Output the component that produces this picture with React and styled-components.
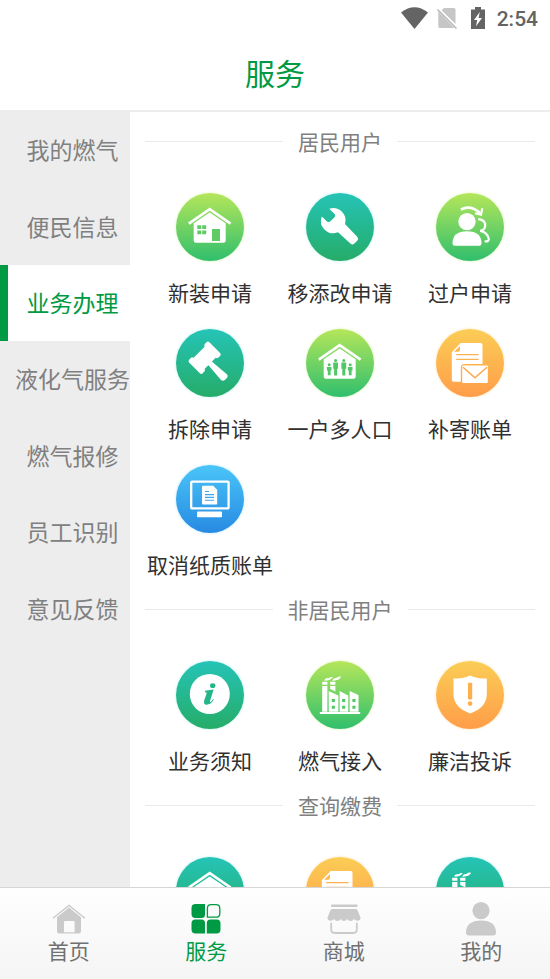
import React, { useState } from "react";
import styled, { createGlobalStyle } from "styled-components";

const GlobalStyle = createGlobalStyle`
  * { box-sizing: border-box; }
  body {
    margin: 0;
    background: #fff;
    font-family: "Noto Sans CJK SC", sans-serif;
  }
  button { border: 0; padding: 0; background: none; font: inherit; cursor: pointer; }
`;

const GREEN = "#009a44";

const Page = styled.div`
  height: 100vh;
  display: flex;
  flex-direction: column;
  overflow: hidden;
`;

const StatusBar = styled.div`
  height: 36px;
  flex: none;
  display: flex;
  align-items: center;
  justify-content: flex-end;
  gap: 12px;
  padding-right: 12px;
  color: #646464;
`;

const Clock = styled.time`
  font: 500 21px/36px Roboto, sans-serif;
  padding-top: 2px;
`;

const Header = styled.header`
  flex: none;
  height: 76px;
  border-bottom: 2px solid #ededed;
  display: flex;
  justify-content: center;
`;

const Title = styled.h1`
  margin: 0;
  font-size: 30px;
  line-height: 72px;
  font-weight: 400;
  color: ${GREEN};
`;

const Body = styled.div`
  flex: 1;
  min-height: 0;
  display: flex;
`;

const Sidebar = styled.nav`
  width: 130px;
  flex: none;
  background: #ededed;
`;

const CategoryList = styled.div`
  display: grid;
  grid-auto-rows: 1fr;
  min-height: 535px;
`;

const Category = styled.button`
  && {
    padding: 0 0 2px 15px;
    font-size: 23px;
    white-space: nowrap;
    color: ${(p) => (p.$active ? GREEN : "#808080")};
    background: ${(p) => (p.$active ? "#fff" : "transparent")};
    box-shadow: ${(p) => (p.$active ? `inset 8px 0 ${GREEN}` : "none")};
  }
`;

const Content = styled.main`
  flex: 1;
  min-width: 0;
  overflow: hidden auto;
  scrollbar-width: none;
  padding: 0 15px;
`;

const SectionTitle = styled.h2`
  margin: 0 0 21px;
  height: 60px;
  padding-bottom: 2px;
  display: flex;
  align-items: center;
  gap: 15px;
  font-size: 21px;
  font-weight: 400;
  color: #808080;

  &::before,
  &::after {
    content: "";
    flex: 1;
    height: 1px;
    background: #e9e9e9;
  }
`;

const ServiceGrid = styled.div`
  display: grid;
  grid-template-columns: repeat(3, 1fr);
  row-gap: 21px;
`;

const Service = styled.button`
  display: flex;
  flex-direction: column;
  align-items: center;
  gap: 16px;
  padding-bottom: 1px;
`;

const ServiceLabel = styled.span`
  font-size: 21px;
  line-height: 30px;
  min-height: 30px;
  color: #303030;
  white-space: nowrap;
`;

const tones = {
  green: ["#b5e65a", "#30bf6d", "#d9f5a8"],
  teal: ["#25c4b7", "#25ac68", "#b5eeee"],
  orange: ["#fbcd55", "#ff9d49", "#ffe3ae"],
  blue: ["#4ac5f8", "#278ae2", "#b3e4ff"],
};

const Disc = styled.span`
  width: 68px;
  height: 68px;
  border-radius: 50%;
  color: ${(p) => tones[p.$tone][0]};
  background: linear-gradient(${(p) => tones[p.$tone][0]}, ${(p) => tones[p.$tone][1]});
  box-shadow: 0 0 3px ${(p) => tones[p.$tone][2]};

  svg { display: block; }
`;

const TabBar = styled.nav`
  flex: none;
  display: grid;
  grid-template-columns: repeat(4, 1fr);
  border-top: 1px solid #d6d6d6;
  padding: 14px 0 15px;
  background: linear-gradient(#fefefe, #f5f5f5);
`;

const Tab = styled.button`
  display: flex;
  flex-direction: column;
  align-items: center;
  color: ${(p) => (p.$active ? GREEN : "#cacaca")};
`;

const TabLabel = styled.span`
  font-size: 21px;
  line-height: 28px;
  color: ${(p) => (p.$active ? GREEN : "#707070")};
`;

const HouseShell = () => (
  <>
    <path d="M12.8 30.6 33.7 16.2 54.6 30.6" fill="none" stroke="#fff" strokeWidth="2.6" />
    <path d="M17.7 30.2 33.7 19.4 49.7 30.2V47.2Q49.7 49.7 47.2 49.7H20.2Q17.7 49.7 17.7 47.2Z" fill="#fff" />
  </>
);

const Figure = ({ x, y, h, wide }) => (
  <g fill="#52c765">
    <circle cx={x} cy={y} r="1.5" />
    <path d={`M${x - wide} ${y + 2.2}H${x + wide}V${y + h * 0.55}H${x + wide - 0.9}V${y + h}H${x - wide + 0.9}V${y + h * 0.55}H${x - wide}Z`} />
  </g>
);

const glyphs = {
  house: (
    <>
      <HouseShell />
      <path d="M21.3 32.2h4v3.8h-4zM26.2 32.2h4v3.8h-4zM21.3 37.5h4v3.8h-4zM26.2 37.5h4v3.8h-4zM36 36h8v12h-8z" fill="#5fcb65" />
    </>
  ),
  wrench: (
    <path d="M23.2 15.8A12.3 12.3 0 0 1 39 31L51.2 43.8Q53 45.8 51.2 47.8L48.4 50.6Q46.4 52.4 44.4 50.6L32 39.2A12.3 12.3 0 0 1 15.8 23.4L21 28.4Q22.6 29.6 24.2 28.6L28.8 24Q29.6 22.4 28.6 21Z" fill="#fff" />
  ),
  transfer: (
    <>
      <circle cx="31" cy="28.6" r="8.7" fill="#fff" />
      <path d="M16.5 50.4Q16.5 38.2 31 38.2Q45.5 38.2 45.5 50.4Q45.5 52.7 43.2 52.7H18.8Q16.5 52.7 16.5 50.4Z" fill="#fff" />
      <path d="M25 16.6Q34.5 11.5 44 20" fill="none" stroke="#fff" strokeWidth="2.8" />
      <path d="M39 20.2 45 21.7 46.3 15.2" fill="none" stroke="#fff" strokeWidth="2.2" />
      <path d="M42.2 26.2Q49.4 27 49.2 32.5Q49 37 44.2 37.9Q51 39 52.7 45.5Q53.5 48.6 48.6 48.4" fill="none" stroke="#fff" strokeWidth="2.2" />
    </>
  ),
  gavel: (
    <g transform="translate(28.6 28.8) rotate(-45)" fill="#fff">
      <rect x="-10" y="-7.8" width="20" height="15.6" />
      <rect x="-14.3" y="-9.6" width="6.4" height="19.2" rx="2" />
      <rect x="7.9" y="-9.6" width="6.4" height="19.2" rx="2" />
      <path d="M-2.2 5H2.2L4.1 27Q4.1 30 1 30H-1Q-4.1 30-4.1 27Z" />
    </g>
  ),
  family: (
    <>
      <HouseShell />
      <Figure x={23.2} y={35.8} h={10.5} wide={2.3} />
      <Figure x={29.6} y={31.4} h={15} wide={2.4} />
      <Figure x={37.8} y={31.4} h={15} wide={2.4} />
      <Figure x={44.2} y={35.8} h={10.5} wide={2.3} />
    </>
  ),
  bill: (
    <>
      <path d="M24.7 14H44.5Q46.5 14 46.5 16V35H28.5Q24.8 35 24.8 38.7V52.7H17.8Q15.8 52.7 15.8 50.7V23.3Z" fill="#fff" />
      <path d="M18.2 22.8 24 17V21Q24 22.8 22.2 22.8Z" fill="#fcb84f" />
      <path d="M20.2 25.6H42.5M20.2 30.3H42.5" stroke="#fcb34f" strokeWidth="1.3" />
      <rect x="26.2" y="36.6" width="25.6" height="17.4" rx="1" fill="#fff" />
      <path d="M27 38.2 38.9 48.8 51 38.2" fill="none" stroke="#ffa64c" strokeWidth="1.5" />
    </>
  ),
  monitor: (
    <>
      <rect x="15.2" y="16.6" width="37.4" height="26.8" rx="1" fill="none" stroke="#fff" strokeWidth="2.3" />
      <path d="M27 20.8H37.2L41.2 24.8V38.4Q41.2 39.4 40.2 39.4H27Q26 39.4 26 38.4V21.8Q26 20.8 27 20.8Z" fill="#fff" />
      <path d="M29 26.5H33M29 29.6H38M29 32.4H38M29 35.2H38" stroke="#38a7ed" strokeWidth="1.1" />
      <rect x="21" y="46.6" width="25" height="5.6" rx="0.8" fill="#fff" />
    </>
  ),
  info: (
    <>
      <circle cx="33.8" cy="33" r="20" fill="#fff" />
      <ellipse cx="36.7" cy="24.7" rx="2.7" ry="2.4" fill="#25b58a" />
      <path d="M29 29.8 37.6 28.4 34.2 39.4Q33.6 41.4 34.6 41Q35.8 40.4 37 38L37.8 38.6Q34.8 43.8 30.6 43.8Q27 43.4 28.2 39.4L30.6 32.6Q31.1 31.1 29 31.2Z" fill="#25b58a" />
    </>
  ),
  factory: (
    <>
      <path d="M16.2 20.8h5.2v3h-5.2zM24.2 20.8h5.2v3h-5.2zM16.2 25h5.2V50.8h-5.2zM24.2 25h5.2v5.4l-5.2-2.5z" fill="#fff" />
      <path d="M22.7 30 32.4 34.4V50.8H22.7ZM33.6 30 42.3 34.4V50.8H33.6ZM43.6 30 52.5 34V50.8H43.6Z" fill="#fff" />
      <path d="M13.8 51h40.4v2H13.8zM18 19.6Q19 16.5 22.8 17.2Q24 15.6 26.8 16Q24.8 19.8 18 19.6ZM26.3 19.6Q27.2 16.3 30.3 17Q32 14.8 35.2 15.8Q32.8 20 26.3 19.6Z" fill="#fff" />
      <path d="M25.8 38h3.1v3h-3.1zM36.1 38h3.1v3h-3.1zM46.4 38h3.1v3h-3.1zM25.8 44.7h3.1v3h-3.1zM36.1 44.7h3.1v3h-3.1zM46.4 44.7h3.1v3h-3.1z" fill="#52c765" />
    </>
  ),
  shield: (
    <>
      <path d="M34.2 14.4Q41.5 17.6 50.8 17.6V33Q50.8 46.6 34.2 52.4Q17.5 46.6 17.5 33V17.6Q26.8 17.6 34.2 14.4Z" fill="#fff" />
      <rect x="32" y="21.8" width="4.2" height="16.6" rx="0.8" fill="#fdae4d" />
      <circle cx="34.1" cy="42.6" r="2.3" fill="#fdae4d" />
    </>
  ),
};

const sections = [
  {
    title: "居民用户",
    items: [
      ["house", "green", "新装申请"],
      ["wrench", "teal", "移添改申请"],
      ["transfer", "green", "过户申请"],
      ["gavel", "teal", "拆除申请"],
      ["family", "green", "一户多人口"],
      ["bill", "orange", "补寄账单"],
      ["monitor", "blue", "取消纸质账单"],
    ],
  },
  {
    title: "非居民用户",
    items: [
      ["info", "teal", "业务须知"],
      ["factory", "green", "燃气接入"],
      ["shield", "orange", "廉洁投诉"],
    ],
  },
  {
    title: "查询缴费",
    items: [
      ["house", "teal"],
      ["bill", "orange"],
      ["factory", "teal"],
    ],
  },
];

const categories = ["我的燃气", "便民信息", "业务办理", "液化气服务", "燃气报修", "员工识别", "意见反馈"];

const tabs = [
  {
    label: "首页",
    icon: (
      <>
        <path d="M1 16.2 17 3.4 33 16.2" fill="none" stroke="currentColor" strokeWidth="1.3" />
        <path d="M17 5.6 29 15.2V28.7Q29 31.6 26.1 31.6H7.9Q5 31.6 5 28.7V15.2ZM13.2 19Q12 19 12 20.2V30.2H22.6V20.2Q22.6 19 21.4 19Z" fill="currentColor" fillRule="evenodd" />
      </>
    ),
  },
  {
    label: "服务",
    icon: (
      <>
        <path d="M6.5 2H16V12.5Q16 16 12.5 16H6.5Q2.5 16 2.5 12V6Q2.5 2 6.5 2ZM6.5 17.6H12.5Q16 17.6 16 21.1V31.6H6.5Q2.5 31.6 2.5 27.6V21.6Q2.5 17.6 6.5 17.6ZM21.5 17.6H27.5Q31.5 17.6 31.5 21.6V27.6Q31.5 31.6 27.5 31.6H17.8V21.1Q17.8 17.6 21.5 17.6Z" fill="currentColor" />
        <path d="M22 2.6H27Q30.8 2.6 30.8 6.4V11.4Q30.8 15.2 27 15.2H18.4V6.4Q18.4 2.6 22 2.6Z" fill="none" stroke="currentColor" strokeWidth="1.3" />
      </>
    ),
  },
  {
    label: "商城",
    icon: (
      <>
        <rect x="4" y="2.5" width="26.5" height="2.6" rx="0.8" fill="currentColor" />
        <path d="M5.5 7H28.5Q30 7 30.5 8.2L33.5 15.5Q33.5 18.8 30.3 18.8Q28.2 18.8 27 17Q25.8 19 23.6 19Q21.4 19 20.2 17Q19 19 17 19Q15 19 13.8 17Q12.6 19 10.4 19Q8.2 19 7 17Q5.8 18.8 3.7 18.8Q.5 18.8.5 15.5L3.5 8.2Q4 7 5.5 7Z" fill="currentColor" />
        <path d="M4.2 20.8V27.6Q4.2 31 7.6 31H26.4Q29.8 31 29.8 27.6V20.8" fill="none" stroke="currentColor" strokeWidth="1.8" />
      </>
    ),
  },
  {
    label: "我的",
    icon: (
      <>
        <circle cx="17" cy="8.6" r="8.6" fill="currentColor" />
        <path d="M2 30.4Q2.4 18.6 17 18.6Q31.6 18.6 32 30.4Q32 33.4 29 33.4H5Q2 33.4 2 30.4Z" fill="currentColor" />
      </>
    ),
  },
];

export default function App() {
  const [category, setCategory] = useState(2);
  const [tab, setTab] = useState(1);

  return (
    <Page>
      <GlobalStyle />
      <StatusBar>
        <svg width="84" height="22" viewBox="0 0 84 22" aria-hidden="true">
          <path d="M0 5.5Q13.5-5 27 5.5L13.5 22Z" fill="currentColor" />
          <path d="M43 1H53Q54.5 1 54.5 2.5V17L40.5 3.2ZM37.3 4.6 53.3 21H39Q37.3 21 37.3 19.5Z" fill="#c6c6c6" />
          <path d="M36.5 2.5 55.5 21.5" stroke="#b6b6b6" strokeWidth="1.5" />
          <path d="M74 0H80V2.4H84V22H70V2.4H74ZM78.8 5 73 13H76.2L75 19.2 81 11H77.6Z" fill="currentColor" fillRule="evenodd" />
        </svg>
        <Clock>2:54</Clock>
      </StatusBar>
      <Header>
        <Title>服务</Title>
      </Header>
      <Body>
        <Sidebar>
          <CategoryList>
            {categories.map((name, i) => (
              <Category key={name} type="button" $active={i === category} onClick={() => setCategory(i)}>
                {name}
              </Category>
            ))}
          </CategoryList>
        </Sidebar>
        <Content>
          {sections.map((section) => (
            <section key={section.title}>
              <SectionTitle>{section.title}</SectionTitle>
              <ServiceGrid>
                {section.items.map(([glyph, tone, label]) => (
                  <Service key={glyph} type="button">
                    <Disc $tone={tone}>
                      <svg width="68" height="68" viewBox="0 0 68 68" aria-hidden="true">
                        {glyphs[glyph]}
                      </svg>
                    </Disc>
                    <ServiceLabel>{label}</ServiceLabel>
                  </Service>
                ))}
              </ServiceGrid>
            </section>
          ))}
        </Content>
      </Body>
      <TabBar>
        {tabs.map(({ label, icon }, i) => (
          <Tab key={label} type="button" $active={i === tab} onClick={() => setTab(i)}>
            <svg width="34" height="34" viewBox="0 0 34 34" aria-hidden="true">
              {icon}
            </svg>
            <TabLabel $active={i === tab}>{label}</TabLabel>
          </Tab>
        ))}
      </TabBar>
    </Page>
  );
}
